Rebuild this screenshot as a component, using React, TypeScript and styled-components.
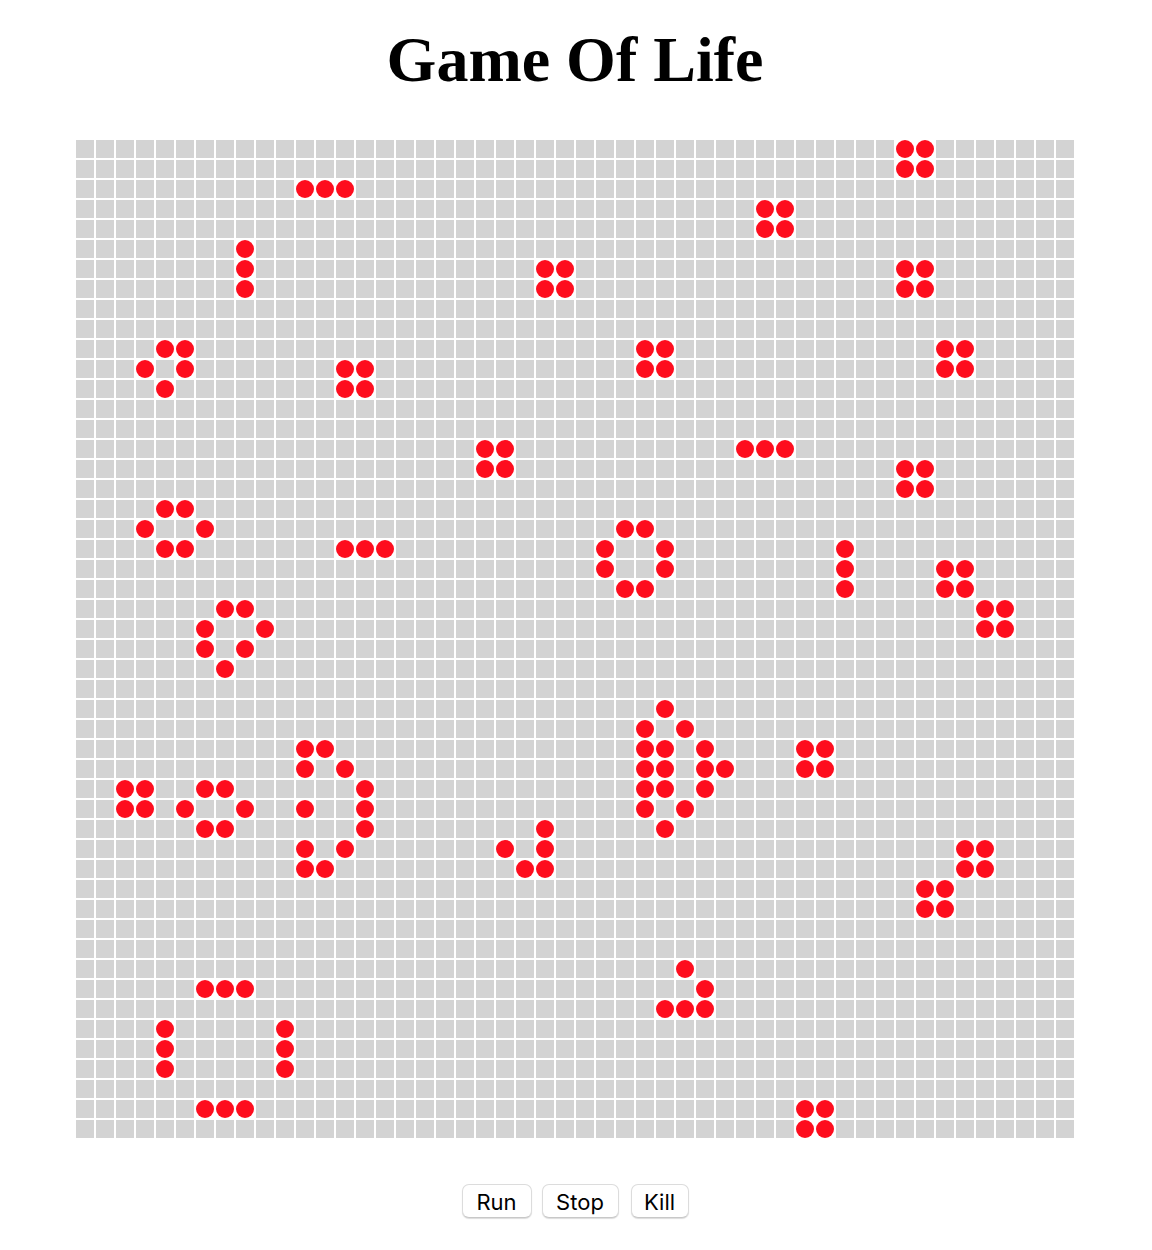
import React from "react";
import styled, { createGlobalStyle } from "styled-components";

const SIZE = 50;

// live cells as [row, columns]
const LIVE: [number, number[]][] = [
  [0, [41, 42]],
  [1, [41, 42]],
  [2, [11, 12, 13]],
  [3, [34, 35]],
  [4, [34, 35]],
  [5, [8]],
  [6, [8, 23, 24, 41, 42]],
  [7, [8, 23, 24, 41, 42]],
  [10, [4, 5, 28, 29, 43, 44]],
  [11, [3, 5, 13, 14, 28, 29, 43, 44]],
  [12, [4, 13, 14]],
  [15, [20, 21, 33, 34, 35]],
  [16, [20, 21, 41, 42]],
  [17, [41, 42]],
  [18, [4, 5]],
  [19, [3, 6, 27, 28]],
  [20, [4, 5, 13, 14, 15, 26, 29, 38]],
  [21, [26, 29, 38, 43, 44]],
  [22, [27, 28, 38, 43, 44]],
  [23, [7, 8, 45, 46]],
  [24, [6, 9, 45, 46]],
  [25, [6, 8]],
  [26, [7]],
  [28, [29]],
  [29, [28, 30]],
  [30, [11, 12, 28, 29, 31, 36, 37]],
  [31, [11, 13, 28, 29, 31, 32, 36, 37]],
  [32, [2, 3, 6, 7, 14, 28, 29, 31]],
  [33, [2, 3, 5, 8, 11, 14, 28, 30]],
  [34, [6, 7, 14, 23, 29]],
  [35, [11, 13, 21, 23, 44, 45]],
  [36, [11, 12, 22, 23, 44, 45]],
  [37, [42, 43]],
  [38, [42, 43]],
  [41, [30]],
  [42, [6, 7, 8, 31]],
  [43, [29, 30, 31]],
  [44, [4, 10]],
  [45, [4, 10]],
  [46, [4, 10]],
  [48, [6, 7, 8, 36, 37]],
  [49, [36, 37]],
];

const liveSet = new Set<string>();
LIVE.forEach(([row, cols]) => cols.forEach((col) => liveSet.add(`${row}-${col}`)));

const GlobalStyle = createGlobalStyle`
  html, body {
    margin: 0;
    padding: 0;
    background: #fff;
  }
`;

const Page = styled.div`
  width: 1150px;
  height: 1250px;
  display: flex;
  flex-direction: column;
  align-items: center;
  overflow: hidden;
`;

const Title = styled.h1`
  margin: 21px 0 0;
  height: 77px;
  font-family: "Liberation Serif", "Times New Roman", serif;
  font-size: 64px;
  line-height: 77px;
  font-weight: bold;
  color: #000;
  text-align: center;
`;

const Board = styled.div`
  margin-top: 42px;
  display: grid;
  grid-template-columns: repeat(${SIZE}, 18px);
  grid-auto-rows: 18px;
  gap: 2px;
`;

const Cell = styled.div<{ $alive: boolean }>`
  width: 18px;
  height: 18px;
  background: ${(p) => (p.$alive ? "#fe0d1e" : "#d3d3d3")};
  border-radius: ${(p) => (p.$alive ? "50%" : "0")};
`;

const Controls = styled.div`
  margin-top: 46px;
  display: flex;
  justify-content: center;
`;

const Button = styled.button<{ $width: number; $gap?: number }>`
  width: ${(p) => p.$width}px;
  height: 34px;
  margin-left: ${(p) => p.$gap ?? 0}px;
  padding: 2px 0 0;
  box-sizing: border-box;
  background: #fff;
  border: 1px solid #dcdcdc;
  border-bottom-color: #c8c8c8;
  border-radius: 7px;
  box-shadow: 0 1px 1px rgba(0, 0, 0, 0.14);
  font-family: Inter, "Liberation Sans", Arial, sans-serif;
  font-size: 22px;
  color: #000;
  cursor: pointer;
`;

const cells = Array.from({ length: SIZE * SIZE }, (_, i) => {
  const row = Math.floor(i / SIZE);
  const col = i % SIZE;
  return { key: `${row}-${col}`, alive: liveSet.has(`${row}-${col}`) };
});

const App = () => {
  return (
    <Page>
      <GlobalStyle />
      <Title>Game Of Life</Title>
      <Board>
        {cells.map((c) => (
          <Cell key={c.key} $alive={c.alive} />
        ))}
      </Board>
      <Controls>
        <Button $width={70}>Run</Button>
        <Button $width={77} $gap={10}>Stop</Button>
        <Button $width={58} $gap={12}>Kill</Button>
      </Controls>
    </Page>
  );
};

export default App;
